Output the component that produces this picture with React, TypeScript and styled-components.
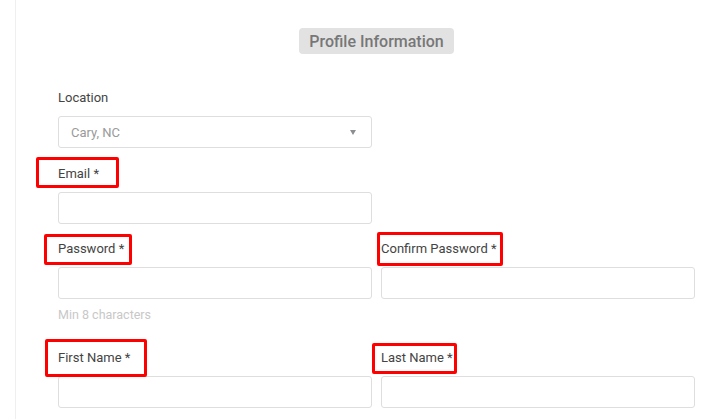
import React from 'react'
import styled, { createGlobalStyle } from 'styled-components'

const GlobalStyle = createGlobalStyle`
  body {
    margin: 0;
    background: #fff;
    font-family: Roboto, "Liberation Sans", Arial, sans-serif;
  }
`

const Sheet = styled.div`
  margin-left: 15px;
  min-height: 100vh;
  border-left: 1px solid #efefef;
  padding: 28px 18px 0 42px;
  box-sizing: border-box;
`
const TitleRow = styled.div`
  display: flex;
  justify-content: center;
  margin-bottom: 34px;
`
const Badge = styled.h2`
  margin: 0;
  height: 26px;
  padding: 1px 10px 0;
  box-sizing: border-box;
  border-radius: 4px;
  background: #e2e2e2;
  color: #777;
  font-size: 16px;
  font-weight: 500;
  line-height: 25px;
`
const Form = styled.form`
  display: flex;
  flex-direction: column;
  width: 637px;
`
const Row = styled.div`
  display: grid;
  grid-template-columns: 314px 314px;
  column-gap: 9px;
  margin-bottom: ${p => p.$space ?? 15}px;
`
const Field = styled.div`
  display: flex;
  flex-direction: column;
`
const Label = styled.label`
  position: relative;
  display: block;
  margin-bottom: 8px;
  font-size: 13px;
  line-height: 20px;
  color: #444;
`
// annotation outline drawn over the label
const Highlight = styled.span`
  position: absolute;
  left: ${p => p.$x}px;
  top: ${p => p.$y}px;
  width: ${p => p.$w}px;
  height: ${p => p.$h}px;
  border: 3px solid #ff0000;
  border-radius: 2px;
  box-sizing: border-box;
  pointer-events: none;
`
const Input = styled.input`
  height: 32px;
  width: 100%;
  box-sizing: border-box;
  border: 1px solid #dedede;
  border-radius: 3px;
  background: #fff;
  padding: 0 12px;
  font: inherit;
  font-size: 13px;
  outline: none;
`
const SelectBox = styled.div`
  height: 32px;
  box-sizing: border-box;
  border: 1px solid #dedede;
  border-radius: 3px;
  display: flex;
  align-items: center;
  justify-content: space-between;
  padding: 0 15px 0 12px;
  font-size: 13px;
  color: #9a9a9a;
`
const Caret = styled.span`
  width: 0;
  height: 0;
  border-left: 3.5px solid transparent;
  border-right: 3.5px solid transparent;
  border-top: 5px solid #8a8f94;
`
const Hint = styled.div`
  margin-top: 6px;
  font-size: 12.5px;
  line-height: 20px;
  color: #c8c8c8;
`

const App: React.FC = () => {
  return (
    <Sheet>
      <GlobalStyle />
      <TitleRow>
        <Badge>Profile Information</Badge>
      </TitleRow>
      <Form>
        <Row $space={16}>
          <Field>
            <Label>Location</Label>
            <SelectBox>
              Cary, NC
              <Caret />
            </SelectBox>
          </Field>
        </Row>
        <Row>
          <Field>
            <Label>
              Email *
              <Highlight $x={-22} $y={-7} $w={83} $h={31} />
            </Label>
            <Input type="email" />
          </Field>
        </Row>
        <Row $space={23}>
          <Field>
            <Label>
              Password *
              <Highlight $x={-14} $y={-5} $w={88} $h={31} />
            </Label>
            <Input type="password" />
            <Hint>Min 8 characters</Hint>
          </Field>
          <Field>
            <Label>
              Confirm Password *
              <Highlight $x={-4} $y={-7} $w={126} $h={34} />
            </Label>
            <Input type="password" />
          </Field>
        </Row>
        <Row>
          <Field>
            <Label>
              First Name *
              <Highlight $x={-13} $y={-9} $w={102} $h={38} />
            </Label>
            <Input />
          </Field>
          <Field>
            <Label>
              Last Name *
              <Highlight $x={-9} $y={-5} $w={85} $h={31} />
            </Label>
            <Input />
          </Field>
        </Row>
      </Form>
    </Sheet>
  )
}

export default App
